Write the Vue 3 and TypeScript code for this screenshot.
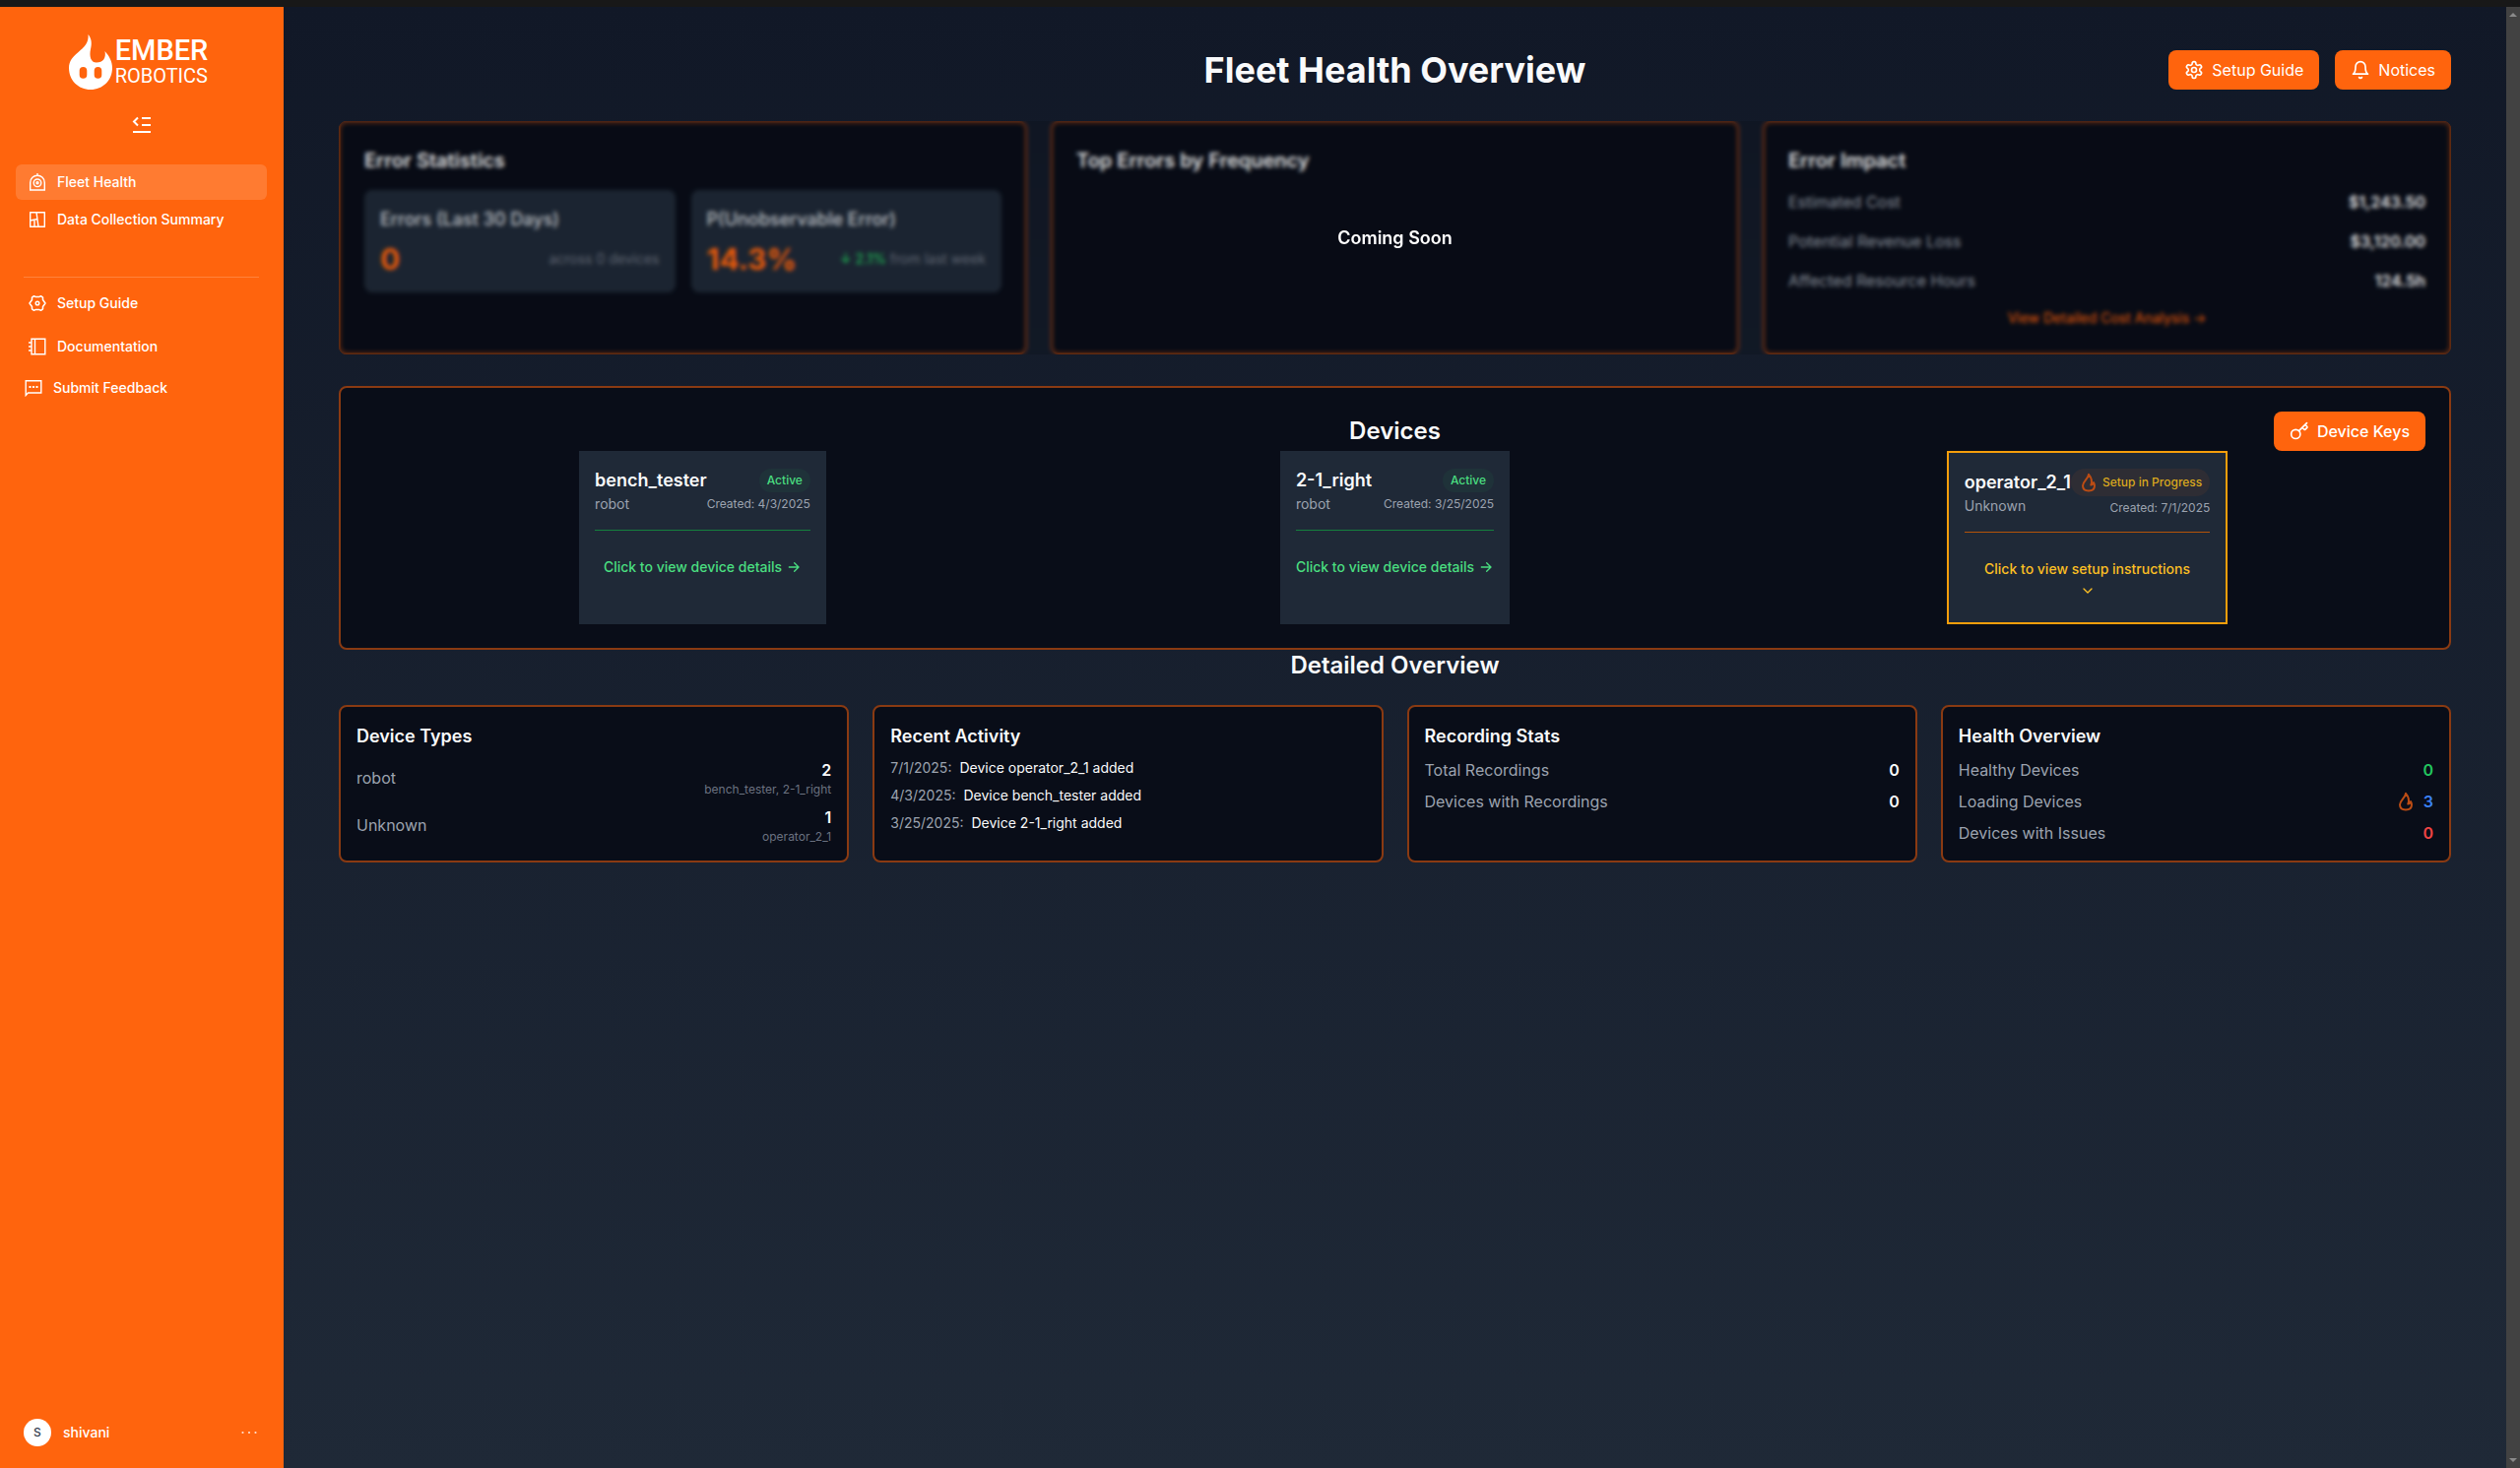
<script setup lang="ts">
interface Device {
  name: string
  kind: string
  created: string
  ready: boolean
}

const devices: Device[] = [
  { name: 'bench_tester', kind: 'robot', created: '4/3/2025', ready: true },
  { name: '2-1_right', kind: 'robot', created: '3/25/2025', ready: true },
  { name: 'operator_2_1', kind: 'Unknown', created: '7/1/2025', ready: false },
]

const impact = [
  { label: 'Estimated Cost', value: '$1,243.50' },
  { label: 'Potential Revenue Loss', value: '$3,120.00' },
  { label: 'Affected Resource Hours', value: '124.5h' },
]

const types = [
  { kind: 'robot', count: 2, names: 'bench_tester, 2-1_right' },
  { kind: 'Unknown', count: 1, names: 'operator_2_1' },
]

const activity = [
  { date: '7/1/2025:', text: 'Device operator_2_1 added' },
  { date: '4/3/2025:', text: 'Device bench_tester added' },
  { date: '3/25/2025:', text: 'Device 2-1_right added' },
]

const recordings = [
  { label: 'Total Recordings', value: 0 },
  { label: 'Devices with Recordings', value: 0 },
]

const health = [
  { label: 'Healthy Devices', value: 0, tone: 'good' },
  { label: 'Loading Devices', value: 3, tone: 'busy' },
  { label: 'Devices with Issues', value: 0, tone: 'bad' },
]

const flame =
  'M10 1.8C9.500 6.500 4 9 4 13.300C4 16.600 6.500 18.500 10 18.500C13.500 18.500 16 16.600 16 13.300C16 12 15.600 11 15 10C14.500 11.800 13.700 12.500 12.300 12.600C13.800 8.800 12.600 4.800 10 1.800Z'
</script>

<template>
  <div class="app">
    <div class="topbar"></div>
    <div class="shell">
      <aside class="sidebar">
        <div class="brand">
          <svg class="brand-mark" viewBox="0 0 44 56" width="44" height="56" aria-hidden="true">
            <path
              fill="#fff"
              fill-rule="evenodd"
              d="M19.500 0C23 4 23.500 9 22 15C20.500 22 22 28.500 28 28.500C34.500 28.500 38 24 36.500 17C41 22 44 27.500 44 34C44 46.500 34.500 56 22 56C9.500 56 0 46.500 0 34C0 27 4 22.500 9.500 18C15.500 13 20.500 8 19.500 0ZM14.500 33A3.800 3.800 0 0 0 10.700 36.800V41A3.800 3.800 0 0 0 18.300 41V36.800A3.800 3.800 0 0 0 14.500 33ZM29.500 33A3.800 3.800 0 0 0 25.700 36.800V41A3.800 3.800 0 0 0 33.300 41V36.800A3.800 3.800 0 0 0 29.500 33Z"
            />
          </svg>
          <div class="brand-name">
            <span class="brand-top">EMBER</span>
            <span class="brand-bottom">ROBOTICS</span>
          </div>
        </div>
        <button class="collapse" type="button" aria-label="Collapse sidebar">
          <svg viewBox="0 0 20 18" width="20" height="18" fill="none" stroke="#fff" stroke-width="2">
            <path d="M6 1.500 2 5.500 6 9.500M10 2H19M10 9H19M1 16H19" />
          </svg>
        </button>

        <nav class="nav">
          <a class="item active" href="#">
            <svg viewBox="0 0 18 18" width="18" height="18" fill="none" stroke="#fff" stroke-width="1.400">
              <path d="M1.700 17V9.500a7.300 7.300 0 0 1 14.600 0V17ZM9 0v2.500" />
              <circle cx="9" cy="9.800" r="3.800" />
              <circle cx="9" cy="9.800" r="1" />
            </svg>
            Fleet Health
          </a>
          <a class="item" href="#">
            <svg viewBox="0 0 18 18" width="18" height="18" fill="none" stroke="#fff" stroke-width="1.400">
              <path d="M1.700 1.700H16.300V16.300H1.700ZM8 1.700 10 16.300M1.700 10 9 8.500M6 9.500V16.300" />
            </svg>
            Data Collection Summary
          </a>
        </nav>
        <hr class="rule" />
        <nav class="nav help">
          <a class="item" href="#">
            <svg viewBox="0 0 18 18" width="18" height="18" fill="none" stroke="#fff" stroke-width="1.500" stroke-linejoin="round">
              <path d="M5.500 1.700 7 2.400H11L12.500 1.700 14.500 3.200V5.500L17 9 14.500 12.500V14.800L12.500 16.300 11 15.600H7L5.500 16.300 3.500 14.800V12.500L1 9 3.500 5.500V3.200Z" />
              <circle cx="9" cy="9" r="1.800" />
            </svg>
            Setup Guide
          </a>
          <a class="item" href="#">
            <svg viewBox="0 0 18 18" width="18" height="18" fill="none" stroke="#fff" stroke-width="1.400">
              <path d="M3 1.200H16.800V16.800H3ZM6.500 1.200V16.800M0 5H3M0 9H3M0 13H3" />
            </svg>
            Documentation
          </a>
          <a class="item feedback" href="#">
            <svg viewBox="0 0 18 18" width="18" height="18" fill="none" stroke="#fff" stroke-width="1.400">
              <path d="M1.200 16.500V1.700H16.800V14H3.500Z" />
              <path d="M4.500 8h2M8 8h2M11.500 8h2" stroke-width="2" />
            </svg>
            Submit Feedback
          </a>
        </nav>

        <div class="user">
          <span class="avatar">S</span>
          <span class="user-name">shivani</span>
          <button class="more" type="button" aria-label="Account menu">
            <svg viewBox="0 0 16 4" width="16" height="4" fill="#fff">
              <circle cx="1.500" cy="2" r="1.100" />
              <circle cx="8" cy="2" r="1.100" />
              <circle cx="14.500" cy="2" r="1.100" />
            </svg>
          </button>
        </div>
      </aside>

      <main class="main">
        <header class="header">
          <h1>Fleet Health Overview</h1>
          <div class="actions">
            <button class="btn" type="button">
              <svg class="line" viewBox="0 0 24 24" width="20" height="20">
                <path d="M12.220 2h-.44a2 2 0 0 0-2 2v.18a2 2 0 0 1-1 1.730l-.43.25a2 2 0 0 1-2 0l-.15-.08a2 2 0 0 0-2.730.73l-.22.38a2 2 0 0 0 .73 2.730l.15.1a2 2 0 0 1 1 1.720v.51a2 2 0 0 1-1 1.740l-.15.09a2 2 0 0 0-.73 2.730l.22.38a2 2 0 0 0 2.730.73l.15-.08a2 2 0 0 1 2 0l.43.25a2 2 0 0 1 1 1.730V20a2 2 0 0 0 2 2h.44a2 2 0 0 0 2-2v-.18a2 2 0 0 1 1-1.730l.43-.25a2 2 0 0 1 2 0l.15.08a2 2 0 0 0 2.730-.73l.22-.39a2 2 0 0 0-.73-2.730l-.15-.08a2 2 0 0 1-1-1.740v-.5a2 2 0 0 1 1-1.740l.15-.09a2 2 0 0 0 .73-2.730l-.22-.38a2 2 0 0 0-2.730-.73l-.15.08a2 2 0 0 1-2 0l-.43-.25a2 2 0 0 1-1-1.730V4a2 2 0 0 0-2-2z" />
                <circle cx="12" cy="12" r="3" />
              </svg>
              Setup Guide
            </button>
            <button class="btn" type="button">
              <svg class="line" viewBox="0 0 24 24" width="20" height="20">
                <path d="M6 8a6 6 0 0 1 12 0c0 7 3 9 3 9H3s3-2 3-9M10.300 21a1.940 1.940 0 0 0 3.400 0" />
              </svg>
              Notices
            </button>
          </div>
        </header>

        <section class="preview">
          <article class="panel">
            <h3>Error Statistics</h3>
            <div class="tiles">
              <div class="tile">
                <h4>Errors (Last 30 Days)</h4>
                <div class="figure">
                  <strong>0</strong>
                  <span>across 0 devices</span>
                </div>
              </div>
              <div class="tile">
                <h4>P(Unobservable Error)</h4>
                <div class="figure">
                  <strong>14.3%</strong>
                  <span><b>↓ 2.1%</b> from last week</span>
                </div>
              </div>
            </div>
          </article>
          <article class="panel">
            <h3>Top Errors by Frequency</h3>
          </article>
          <article class="panel">
            <h3>Error Impact</h3>
            <dl class="impact">
              <div v-for="row in impact" :key="row.label">
                <dt>{{ row.label }}</dt>
                <dd>{{ row.value }}</dd>
              </div>
            </dl>
            <a class="analysis" href="#">View Detailed Cost Analysis →</a>
          </article>
          <div class="veil">Coming Soon</div>
        </section>

        <section class="panel devices">
          <div class="devices-head">
            <h2>Devices</h2>
            <button class="btn" type="button">
              <svg class="line" viewBox="0 0 24 24" width="20" height="20">
                <path d="m15.500 7.500 2.300 2.300a1 1 0 0 0 1.400 0l2.100-2.100a1 1 0 0 0 0-1.400L19 4M21 2l-9.600 9.600" />
                <circle cx="7.500" cy="15.500" r="5.500" />
              </svg>
              Device Keys
            </button>
          </div>
          <div class="device-grid">
            <article v-for="d in devices" :key="d.name" class="device" :class="{ pending: !d.ready }">
              <div class="device-top">
                <div>
                  <h3>{{ d.name }}</h3>
                  <p class="kind">{{ d.kind }}</p>
                </div>
                <div class="device-side">
                  <span class="badge">
                    <svg v-if="!d.ready" class="flame" viewBox="0 0 20 20" width="20" height="20">
                      <path :d="flame" />
                    </svg>
                    {{ d.ready ? 'Active' : 'Setup in Progress' }}
                  </span>
                  <span class="created">Created: {{ d.created }}</span>
                </div>
              </div>
              <a class="device-link" href="#">
                {{ d.ready ? 'Click to view device details' : 'Click to view setup instructions' }}
                <svg class="line" viewBox="0 0 24 24" width="16" height="16">
                  <path v-if="d.ready" d="M5 12h14M13 5.500 19.500 12 13 18.500" />
                  <path v-else d="m6 9 6 6 6-6" />
                </svg>
              </a>
            </article>
          </div>
        </section>

        <h2 class="detail-title">Detailed Overview</h2>
        <section class="details">
          <article class="panel small">
            <h3>Device Types</h3>
            <div v-for="t in types" :key="t.kind" class="row">
              <span>{{ t.kind }}</span>
              <div class="count">
                <b>{{ t.count }}</b>
                <small>{{ t.names }}</small>
              </div>
            </div>
          </article>
          <article class="panel small">
            <h3>Recent Activity</h3>
            <p v-for="a in activity" :key="a.date" class="event">
              <time>{{ a.date }}</time>{{ a.text }}
            </p>
          </article>
          <article class="panel small">
            <h3>Recording Stats</h3>
            <div v-for="r in recordings" :key="r.label" class="row">
              <span>{{ r.label }}</span>
              <b>{{ r.value }}</b>
            </div>
          </article>
          <article class="panel small">
            <h3>Health Overview</h3>
            <div v-for="h in health" :key="h.label" class="row">
              <span>{{ h.label }}</span>
              <b :class="h.tone">
                <svg v-if="h.tone === 'busy'" class="flame" viewBox="0 0 20 20" width="20" height="20">
                  <path :d="flame" />
                </svg>
                {{ h.value }}
              </b>
            </div>
          </article>
        </section>
      </main>

      <div class="scrollbar" aria-hidden="true">
        <svg viewBox="0 0 8 4" width="8" height="4"><path d="M0 4 4 0 8 4Z" fill="#8a8a8a" /></svg>
        <svg viewBox="0 0 8 4" width="8" height="4"><path d="M0 0 4 4 8 0Z" fill="#8a8a8a" /></svg>
      </div>
    </div>
  </div>
</template>

<style>
body {
  margin: 0;
  background: #111827;
}
</style>

<style scoped>
* {
  box-sizing: border-box;
}
h1, h2, h3, h4, p, dl, dd {
  margin: 0;
}
a {
  text-decoration: none;
}
svg {
  display: block;
  flex: none;
}
.app {
  display: flex;
  flex-direction: column;
  min-height: 100vh;
  font-family: Inter, "Liberation Sans", sans-serif;
  font-size: 16px;
  line-height: 24px;
  color: #f9fafb;
}
.topbar {
  height: 7px;
  background: #181818;
}
.shell {
  flex: 1;
  display: flex;
}
.line {
  fill: none;
  stroke: currentColor;
  stroke-width: 2;
  stroke-linecap: round;
  stroke-linejoin: round;
}

/* Sidebar */
.sidebar {
  width: 288px;
  flex: none;
  display: flex;
  flex-direction: column;
  padding: 28px 16px 22px;
  border-right: 1px solid #ff640d;
  background: #ff640d;
  color: #fff;
}
.brand {
  display: flex;
  justify-content: center;
  gap: 3px;
  padding-right: 6px;
}
.brand-name {
  display: flex;
  flex-direction: column;
  padding-top: 2px;
  font-family: Roboto, sans-serif;
}
.brand-top {
  font-size: 29px;
  line-height: 28px;
  font-weight: 500;
}
.brand-bottom {
  font-size: 20px;
  line-height: 24px;
}
.collapse {
  align-self: center;
  margin-top: 27px;
  padding: 0;
  border: 0;
  background: none;
}
.nav {
  display: flex;
  flex-direction: column;
  gap: 2px;
  margin-top: 31px;
}
.item {
  display: flex;
  align-items: center;
  gap: 11px;
  height: 36px;
  padding: 0 13px;
  border-radius: 6px;
  color: #fff;
  font-size: 14px;
  line-height: 20px;
  font-weight: 500;
}
.item.active {
  background: rgba(255, 255, 255, 0.15);
}
.rule {
  width: 239px;
  height: 1px;
  margin: 40px 8px 0;
  border: 0;
  background: rgba(255, 255, 255, 0.2);
}
.help {
  gap: 8px;
  margin-top: 8px;
}
.feedback {
  margin-top: -2px;
  padding: 0 9px;
}
.user {
  display: flex;
  align-items: center;
  gap: 12px;
  margin-top: auto;
  padding: 0 10px 0 8px;
  font-size: 14px;
  line-height: 20px;
  font-weight: 500;
}
.avatar {
  width: 28px;
  height: 28px;
  border-radius: 50%;
  background: #fff;
  color: #374151;
  font-size: 12px;
  line-height: 28px;
  text-align: center;
}
.more {
  margin-left: auto;
  padding: 0;
  border: 0;
  background: none;
  opacity: 0.8;
}

/* Main column */
.main {
  flex: 1;
  min-width: 0;
  padding: 44px 56px;
  background: linear-gradient(to bottom, #111827, #1f2937);
}
.header {
  display: grid;
  grid-template-columns: 1fr auto 1fr;
  align-items: center;
  margin-bottom: 32px;
}
h1 {
  grid-column: 2;
  font-size: 36px;
  line-height: 40px;
  font-weight: 700;
}
.actions {
  display: flex;
  justify-content: flex-end;
  gap: 16px;
}
.btn {
  display: flex;
  align-items: center;
  gap: 8px;
  height: 40px;
  padding: 0 16px;
  border: 0;
  border-radius: 8px;
  background: #ff640d;
  color: #fff;
  font: inherit;
}
.panel {
  padding: 24px;
  border: 2px solid #8a3a12;
  border-radius: 8px;
  background: #090d18;
}

/* Preview row */
.preview {
  position: relative;
  display: grid;
  grid-template-columns: repeat(3, 1fr);
  gap: 24px;
  margin-bottom: 32px;
}
.preview h3 {
  margin-bottom: 16px;
  font-size: 20px;
  line-height: 28px;
  font-weight: 600;
}
.tiles {
  display: grid;
  grid-template-columns: 1fr 1fr;
  gap: 16px;
}
.tile {
  padding: 16px;
  border-radius: 8px;
  background: #1f2937;
}
.tile h4 {
  margin-bottom: 8px;
  font-size: 18px;
  line-height: 28px;
  font-weight: 500;
  color: #d1d5db;
}
.figure {
  display: flex;
  align-items: center;
  justify-content: space-between;
  font-size: 14px;
  line-height: 20px;
  color: #6b7280;
}
.figure strong {
  font-size: 30px;
  line-height: 36px;
  font-weight: 700;
  color: #ff640d;
}
.figure b {
  font-weight: 500;
  color: #22c55e;
}
.impact {
  display: flex;
  flex-direction: column;
  gap: 16px;
}
.impact div {
  display: flex;
  justify-content: space-between;
}
.impact dt {
  color: #9ca3af;
}
.impact dd {
  font-weight: 600;
}
.analysis {
  display: block;
  margin: 16px 0 1px;
  font-size: 14px;
  line-height: 20px;
  text-align: center;
  color: #ff640d;
}
.veil {
  position: absolute;
  inset: 0;
  display: flex;
  align-items: center;
  justify-content: center;
  border-radius: 8px;
  background: rgba(0, 0, 0, 0.1);
  backdrop-filter: blur(2px);
  font-size: 18px;
  line-height: 28px;
  font-weight: 600;
  color: #fff;
}

/* Devices */
.devices-head {
  display: grid;
  grid-template-columns: 1fr auto 1fr;
  align-items: center;
}
h2 {
  font-size: 24px;
  line-height: 32px;
  font-weight: 600;
}
.devices-head h2 {
  grid-column: 2;
}
.devices-head .btn {
  justify-self: end;
  font-weight: 500;
}
.device-grid {
  display: grid;
  grid-template-columns: repeat(3, 1fr);
  justify-items: center;
  gap: 16px;
}
.device {
  padding: 16px;
  background: #1f2937;
}
.device.pending {
  border: 2px solid #f59e0b;
}
.device-top {
  display: flex;
  align-items: center;
  justify-content: space-between;
  padding-bottom: 16px;
  border-bottom: 1px solid #15803d;
}
.pending .device-top {
  border-color: #b45309;
}
.device h3,
.small h3 {
  font-size: 18px;
  line-height: 28px;
  font-weight: 600;
}
.kind {
  font-size: 14px;
  line-height: 20px;
  color: #9ca3af;
}
.device-side {
  display: flex;
  flex-direction: column;
  align-items: flex-end;
  gap: 4px;
}
.badge {
  display: flex;
  align-items: center;
  gap: 4px;
  padding: 4px 8px;
  border-radius: 14px;
  background: rgba(34, 197, 94, 0.06);
  color: #4ade80;
  font-size: 12px;
  line-height: 16px;
  font-weight: 500;
}
.pending .badge {
  background: rgba(255, 100, 13, 0.07);
  color: #d9a81e;
}
.created {
  font-size: 12px;
  line-height: 16px;
  color: #9ca3af;
}
.flame {
  fill: none;
  stroke: #bb4c14;
  stroke-width: 2;
  stroke-linejoin: round;
}
.device-link {
  display: flex;
  align-items: center;
  justify-content: center;
  gap: 4px;
  padding: 27px 0 8px;
  color: #4ade80;
  font-size: 14px;
  line-height: 20px;
  font-weight: 500;
}
.pending .device-link {
  flex-direction: column;
  color: #fbbf24;
}

/* Detailed overview */
.detail-title {
  margin-bottom: 24px;
  text-align: center;
}
.details {
  display: grid;
  grid-template-columns: repeat(4, 1fr);
  gap: 24px;
}
.small {
  display: flex;
  flex-direction: column;
  gap: 8px;
  padding: 16px;
}
.row {
  display: flex;
  align-items: center;
  justify-content: space-between;
}
.row span {
  color: #9ca3af;
}
.row b {
  display: flex;
  align-items: center;
  gap: 8px;
  font-weight: 600;
}
.count {
  display: flex;
  flex-direction: column;
  align-items: flex-end;
}
.count small {
  font-size: 12px;
  line-height: 16px;
  color: #6b7280;
}
.event {
  font-size: 14px;
  line-height: 20px;
}
.event time {
  margin-right: 8px;
  color: #9ca3af;
}
.row .good {
  color: #22c55e;
}
.row .busy {
  color: #3b82f6;
}
.row .bad {
  color: #ef4444;
}

.scrollbar {
  width: 14px;
  flex: none;
  display: flex;
  flex-direction: column;
  align-items: center;
  justify-content: space-between;
  padding: 6px 0;
  background: #424242;
}
</style>
